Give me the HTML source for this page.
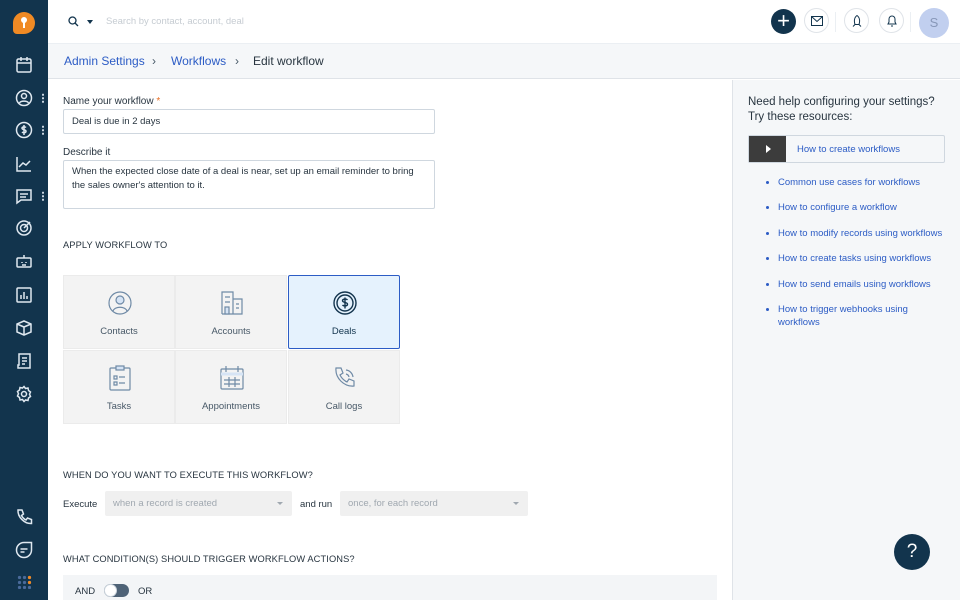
<!DOCTYPE html>
<html><head><meta charset="utf-8"><style>
*{box-sizing:border-box;margin:0;padding:0}
body{width:960px;height:600px;overflow:hidden;font-family:"Liberation Sans",sans-serif;color:#283540;background:#fff;position:relative;font-size:10px}
.side{position:absolute;left:0;top:0;width:48px;height:600px;background:#12344d}
.si{position:absolute;left:15px;width:18px;height:18px}
.si svg{width:18px;height:18px;stroke:#dfe8f0;fill:none;stroke-width:1.5}
.dots{position:absolute;left:42px;width:2px;height:10px;background:radial-gradient(circle,#c9d5e0 1px,transparent 1.2px) 0 0/2px 3.5px}
.top{position:absolute;left:48px;top:0;right:0;height:44px;background:#fff;border-bottom:1px solid #ebeff3}
.crumb{position:absolute;left:48px;top:44px;right:0;height:35px;background:#f5f7f9;border-bottom:1px solid #dfe3e8;font-size:12px;line-height:35px}
.crumb a{color:#2c5cc5;position:absolute}
.right{position:absolute;left:732px;top:80px;right:0;bottom:0;background:#f5f7f9;border-left:1px solid #dfe3e8}
.right a{color:#2c5cc5;font-size:9.5px;position:absolute;left:45px;line-height:13px}
.b{position:absolute;left:33px;width:3px;height:3px;border-radius:50%;background:#2c5cc5}
.lbl{position:absolute;left:63px;font-size:10px;color:#283540}
.inp{position:absolute;left:63px;width:372px;border:1px solid #cfd7df;border-radius:2px;background:#fff;font-size:9.5px;padding:0 8px;color:#283540}
.h{position:absolute;left:63px;font-size:9.3px;letter-spacing:.1px;color:#283540}
.grid{position:absolute;left:63px;top:275px;width:338px;height:150px}
.c{position:absolute;width:112px;height:74px;background:#f3f3f3;border:1px solid #ebebeb;text-align:center;font-size:9.5px;color:#475867}
.c span{position:absolute;left:0;right:0;top:50px}
.c svg{position:absolute;left:44px;top:14px;width:24px;height:26px;fill:none;stroke:#6f8aa6;stroke-width:1.2}
.sel{position:absolute;height:25px;background:#f0f0f0;border-radius:2px;font-size:9.5px;color:#a0a8b0;line-height:25px;padding-left:8px}
.sel:after{content:"";position:absolute;right:9px;top:11px;border:3px solid transparent;border-top-color:#a0a8b0}
.circ{position:absolute;top:8px;width:25px;height:25px;border-radius:50%;border:1px solid #dfe3e8;background:#fff}
</style></head><body>
<div class="side">
 <div style="position:absolute;left:13px;top:12px;width:22px;height:22px;background:#f08a24;border-radius:50% 50% 50% 4px/50% 50% 50% 4px"></div>
 <div style="position:absolute;left:21px;top:17px;width:6px;height:6px;border-radius:50%;background:#fff"></div>
 <div style="position:absolute;left:23px;top:22px;width:2px;height:6px;background:#fff"></div>
 <div class="si" style="top:56px"><svg viewBox="0 0 18 18"><rect x="2" y="3" width="14" height="13" rx="1.5"/><path d="M2 7h14M6 1v4M12 1v4"/></svg></div>
 <div class="si" style="top:89px"><svg viewBox="0 0 18 18"><circle cx="9" cy="9" r="7.5"/><circle cx="9" cy="7" r="2.5"/><path d="M4.5 14c1-2.5 8-2.5 9 0"/></svg></div><div class="dots" style="top:93px"></div>
 <div class="si" style="top:121px"><svg viewBox="0 0 18 18"><circle cx="9" cy="9" r="7.5"/><path d="M11 6.5c-1-1-4-1-4 .8s4 1 4 2.9-3 1.8-4 .8M9 4v10"/></svg></div><div class="dots" style="top:125px"></div>
 <div class="si" style="top:155px"><svg viewBox="0 0 18 18"><path d="M2 2v14h14M4 12l4-4 3 2 4-4"/></svg></div>
 <div class="si" style="top:187px"><svg viewBox="0 0 18 18"><path d="M2 3h14v10H6l-4 3z M5 7h8M5 10h6"/></svg></div><div class="dots" style="top:191px"></div>
 <div class="si" style="top:219px"><svg viewBox="0 0 18 18"><circle cx="9" cy="9" r="7"/><circle cx="9" cy="9" r="3.5"/><path d="M9 9l6-6"/></svg></div>
 <div class="si" style="top:253px"><svg viewBox="0 0 18 18"><rect x="2" y="5" width="14" height="9" rx="1"/><path d="M9 2v3M7 9v1M11 9v1M7 12h4"/></svg></div>
 <div class="si" style="top:286px"><svg viewBox="0 0 18 18"><rect x="2" y="2" width="14" height="14" rx="1"/><path d="M6 13V9M9 13V6M12 13v-3"/></svg></div>
 <div class="si" style="top:319px"><svg viewBox="0 0 18 18"><path d="M9 2l7 3v8l-7 3-7-3V5zM2 5l7 3 7-3M9 8v8"/></svg></div>
 <div class="si" style="top:352px"><svg viewBox="0 0 18 18"><path d="M4 2h11v14H3v-3h1zM7 6h5M7 9h5M7 12h3"/></svg></div>
 <div class="si" style="top:385px"><svg viewBox="0 0 18 18"><circle cx="9" cy="9" r="2.5"/><path d="M9 1.5l1.5 2 2.5-.5.5 2.5 2 1.5-1 2.2 1 2.3-2 1.5-.5 2.5-2.5-.5L9 16.5l-1.5-2-2.5.5-.5-2.5-2-1.5 1-2.3-1-2.2 2-1.5.5-2.5 2.5.5z"/></svg></div>
 <div class="si" style="top:508px"><svg viewBox="0 0 18 18"><path d="M3 2h4l1.5 4-2 1.5c1 2 2.5 3.5 4.5 4.5l1.5-2 4 1.5v4c-7 .5-14-6.5-13.5-13.5z"/></svg></div>
 <div class="si" style="top:541px"><svg viewBox="0 0 18 18"><path d="M9 1.5a7.5 7.5 0 1 0 7.5 7.5V1.5z M5.5 8h7M5.5 11h4"/></svg></div>
 <div style="position:absolute;left:17px;top:575px;width:14px;height:14px;background:radial-gradient(circle,#4a6a9a 1.6px,transparent 1.8px) 0 0/5px 5px"></div>
 <div style="position:absolute;left:27px;top:575px;width:5px;height:10px;background:radial-gradient(circle,#f08a24 1.6px,transparent 1.8px) 0 0/5px 5px"></div>
</div>
<div class="top">
 <svg style="position:absolute;left:20px;top:16px" width="11" height="11" viewBox="0 0 11 11" fill="none" stroke="#12344d" stroke-width="1.3"><circle cx="4.5" cy="4.5" r="3.5"/><path d="M7 7l3 3"/></svg>
 <div style="position:absolute;left:39px;top:20px;border:3.5px solid transparent;border-top:4px solid #12344d"></div>
 <div style="position:absolute;left:58px;top:16px;font-size:9.5px;color:#c6ccd2">Search by contact, account, deal</div>
 <div style="position:absolute;left:723px;top:9px;width:25px;height:25px;border-radius:50%;background:#12344d;color:#fff;font-size:22px;line-height:23px;text-align:center">+</div>
 <div class="circ" style="left:756px"><svg style="position:absolute;left:6px;top:7px" width="12" height="10" viewBox="0 0 12 10" fill="none" stroke="#12344d"><rect x=".5" y=".5" width="11" height="9"/><path d="M.5 .5l5.5 5 5.5-5"/></svg></div>
 <div style="position:absolute;left:787px;top:12px;width:1px;height:20px;background:#ebeff3"></div>
 <div class="circ" style="left:796px"><svg style="position:absolute;left:7px;top:6px" width="10" height="12" viewBox="0 0 10 12" fill="none" stroke="#12344d"><path d="M5 .5c3 2 3 6 2 9H3C2 6.5 2 2.5 5 .5zM3 9.5l-2 2M7 9.5l2 2"/></svg></div>
 <div class="circ" style="left:831px"><svg style="position:absolute;left:7px;top:6px" width="10" height="12" viewBox="0 0 10 12" fill="none" stroke="#12344d"><path d="M1 9h8L8 7V4a3 3 0 0 0-6 0v3zM4 11h2"/></svg></div>
 <div style="position:absolute;left:862px;top:12px;width:1px;height:20px;background:#ebeff3"></div>
 <div style="position:absolute;left:871px;top:8px;width:30px;height:30px;border-radius:50%;background:#c1cfef;color:#8797b8;font-size:13px;line-height:30px;text-align:center">S</div>
</div>
<div class="crumb">
 <a style="left:16px">Admin Settings</a><span style="position:absolute;left:104px;color:#475867">›</span>
 <a style="left:123px">Workflows</a><span style="position:absolute;left:187px;color:#475867">›</span>
 <span style="position:absolute;left:205px;color:#283540">Edit workflow</span>
</div>
<div class="lbl" style="top:96px">Name your workflow <span style="color:#e86f25">*</span></div>
<div class="inp" style="top:109px;height:25px;line-height:24px">Deal is due in 2 days</div>
<div class="lbl" style="top:147px">Describe it</div>
<div class="inp" style="top:160px;height:49px;padding-top:4px;line-height:14px">When the expected close date of a deal is near, set up an email reminder to bring the sales owner's attention to it.</div>
<div class="h" style="top:240px">APPLY WORKFLOW TO</div>
<div class="grid">
 <div class="c" style="left:0;top:0"><svg viewBox="0 0 24 26"><circle cx="12" cy="13" r="11"/><circle cx="12" cy="10" r="4" fill="#d6e4f5"/><path d="M5 21c2-5 12-5 14 0"/></svg><span>Contacts</span></div>
 <div class="c" style="left:112px;top:0"><svg viewBox="0 0 24 26"><path d="M2 24V2h11v22M13 9h9v15H2M5 7h5M5 12h5M16 14h3M16 18h3"/><rect x="5" y="17" width="4" height="7" fill="#d6e4f5"/></svg><span>Accounts</span></div>
 <div class="c" style="left:225px;top:0;background:#e5f2fd;border:1px solid #2c5cc5;border-radius:2px;color:#12344d"><svg viewBox="0 0 24 26" style="stroke:#12344d;stroke-width:1.4"><circle cx="12" cy="13" r="11"/><circle cx="12" cy="13" r="8"/><path d="M14.5 10c-1-1.3-5-1.3-5 .8s5 1.2 5 3.4-4 2-5 .8M12 7.5v11"/></svg><span>Deals</span></div>
 <div class="c" style="left:0;top:75px"><svg viewBox="0 0 24 26"><rect x="2" y="3" width="20" height="22" rx="1"/><rect x="8" y="1" width="8" height="4" fill="#d6e4f5"/><path d="M6 11h3v3H6zM6 17h3v3H6zM11 12h6M11 18h6"/></svg><span>Tasks</span></div>
 <div class="c" style="left:112px;top:75px"><svg viewBox="0 0 24 26"><rect x="1" y="4" width="22" height="20" rx="1"/><path d="M1 9h22" stroke-width="3" stroke="#d6e4f5"/><path d="M6 1v6M18 1v6M9 12v10M15 12v10M4 15h16M4 19h16"/></svg><span>Appointments</span></div>
 <div class="c" style="left:225px;top:75px"><svg viewBox="0 0 24 26"><path d="M3 3h5l2 5-3 2c1.5 3 4 5.5 7 7l2-3 5 2v5c-10 1-19-8-18-18zM13 5a8 8 0 0 1 7 7M13 9a4 4 0 0 1 3 3"/></svg><span>Call logs</span></div>
</div>
<div class="h" style="top:470px">WHEN DO YOU WANT TO EXECUTE THIS WORKFLOW?</div>
<div class="lbl" style="top:499px;font-size:9.5px">Execute</div>
<div class="sel" style="left:105px;top:491px;width:187px">when a record is created</div>
<div class="lbl" style="left:300px;top:499px;font-size:9.5px">and run</div>
<div class="sel" style="left:340px;top:491px;width:188px">once, for each record</div>
<div class="h" style="top:554px">WHAT CONDITION(S) SHOULD TRIGGER WORKFLOW ACTIONS?</div>
<div style="position:absolute;left:63px;top:575px;width:654px;height:25px;background:#f3f5f7"></div>
<div class="lbl" style="left:75px;top:586px;font-size:9.5px">AND</div>
<div style="position:absolute;left:104px;top:584px;width:25px;height:13px;border-radius:7px;background:#4f6377"></div>
<div style="position:absolute;left:104px;top:584px;width:13px;height:13px;border-radius:50%;background:#fff;border:1px solid #cfd7df"></div>
<div class="lbl" style="left:138px;top:586px;font-size:9.5px">OR</div>
<div class="right">
 <div style="position:absolute;left:15px;top:15px;font-size:11.5px;line-height:15px;color:#283540">Need help configuring your settings?<br>Try these resources:</div>
 <div style="position:absolute;left:15px;top:55px;width:197px;height:28px;border:1px solid #cfd7df;background:#f5f7f9;border-radius:2px">
  <div style="position:absolute;left:0;top:0;width:37px;height:26px;background:#3c3c3c"></div>
  <div style="position:absolute;left:17px;top:9px;border:4px solid transparent;border-left:5px solid #fff;border-right:0"></div>
  <div style="position:absolute;left:48px;top:8px;font-size:9.5px;color:#2c5cc5">How to create workflows</div>
 </div>
 <div class="b" style="top:101px"></div><a style="top:96px">Common use cases for workflows</a>
 <div class="b" style="top:126px"></div><a style="top:121px">How to configure a workflow</a>
 <div class="b" style="top:152px"></div><a style="top:147px">How to modify records using workflows</a>
 <div class="b" style="top:177px"></div><a style="top:172px">How to create tasks using workflows</a>
 <div class="b" style="top:203px"></div><a style="top:198px">How to send emails using workflows</a>
 <div class="b" style="top:228px"></div><a style="top:223px">How to trigger webhooks using<br>workflows</a>
 <div style="position:absolute;left:161px;top:454px;width:36px;height:36px;border-radius:50%;background:#12344d;color:#fff;font-size:19px;line-height:36px;text-align:center">?</div>
</div>
</body></html>
